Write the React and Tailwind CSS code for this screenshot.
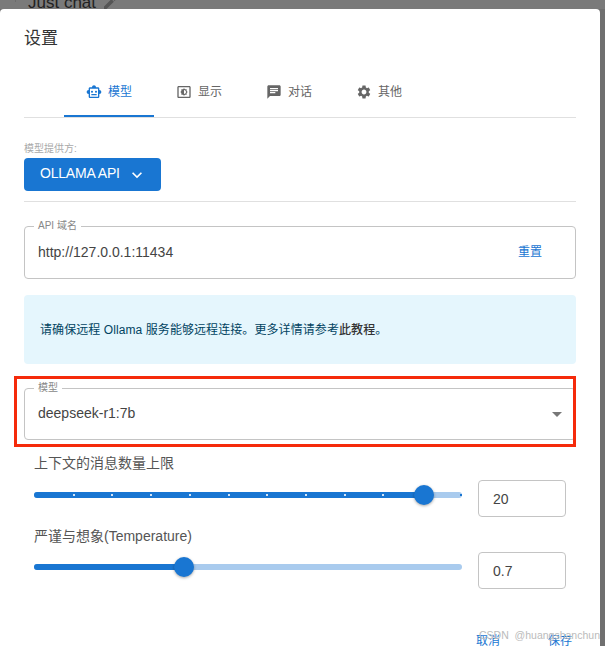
const SANS = "font-['Liberation_Sans','Noto_Sans_CJK_SC',sans-serif]"

function TabIcon({ d, className }) {
  return (
    <svg viewBox="0 0 24 24" fill="currentColor" className={className}>
      <path d={d} />
    </svg>
  )
}

const tabs = [
  {
    label: '模型',
    active: true,
    d: 'M20 9V7c0-1.1-.9-2-2-2h-3c0-1.66-1.34-3-3-3S9 3.34 9 5H6c-1.1 0-2 .9-2 2v2c-1.66 0-3 1.34-3 3s1.34 3 3 3v4c0 1.1.9 2 2 2h12c1.1 0 2-.9 2-2v-4c1.66 0 3-1.34 3-3s-1.34-3-3-3zm-2 10H6V7h12v12zm-9-6c-.83 0-1.5-.67-1.5-1.5S8.17 10 9 10s1.5.67 1.5 1.5S9.83 13 9 13zm7.5-1.5c0 .83-.67 1.5-1.5 1.5s-1.5-.67-1.5-1.5.67-1.5 1.5-1.5 1.5.67 1.5 1.5zM8 15h8v2H8v-2z',
  },
  {
    label: '显示',
    d: 'M20 3H4c-1.1 0-2 .9-2 2v14c0 1.1.9 2 2 2h16c1.1 0 2-.9 2-2V5c0-1.1-.9-2-2-2zm0 16.01H4V4.99h16v14.02zM8 16h2.5l1.5 1.5 1.5-1.5H16v-2.5l1.5-1.5-1.5-1.5V8h-2.5L12 6.5 10.5 8H8v2.5L6.5 12 8 13.5V16zm4-7c1.66 0 3 1.34 3 3s-1.34 3-3 3V9z',
  },
  {
    label: '对话',
    d: 'M20 2H4c-1.1 0-1.99.9-1.99 2L2 22l4-4h14c1.1 0 2-.9 2-2V4c0-1.1-.9-2-2-2zM6 9h12v2H6V9zm8 5H6v-2h8v2zm4-6H6V6h12v2z',
  },
  {
    label: '其他',
    d: 'M19.14 12.94c.04-.3.06-.61.06-.94 0-.32-.02-.64-.07-.94l2.03-1.58c.18-.14.23-.41.12-.61l-1.92-3.32c-.12-.22-.37-.29-.59-.22l-2.39.96c-.5-.38-1.03-.7-1.62-.94l-.36-2.54c-.04-.24-.24-.41-.48-.41h-3.84c-.24 0-.43.17-.47.41l-.36 2.54c-.59.24-1.13.57-1.62.94l-2.39-.96c-.22-.08-.47 0-.59.22L2.74 8.87c-.12.21-.08.47.12.61l2.03 1.58c-.05.3-.09.63-.09.94s.02.64.07.94l-2.03 1.58c-.18.14-.23.41-.12.61l1.92 3.32c.12.22.37.29.59.22l2.39-.96c.5.38 1.03.7 1.62.94l.36 2.54c.05.24.24.41.48.41h3.84c.24 0 .44-.17.47-.41l.36-2.54c.59-.24 1.13-.56 1.62-.94l2.39.96c.22.08.47 0 .59-.22l1.92-3.32c.12-.22.07-.47-.12-.61l-2.01-1.58zM12 15.6c-1.98 0-3.6-1.62-3.6-3.6s1.62-3.6 3.6-3.6 3.6 1.62 3.6 3.6-1.62 3.6-3.6 3.6z',
  },
]

function Tab({ tab }) {
  return (
    <div
      className={`flex h-[38px] w-[90px] items-center justify-center gap-[6px] border-b-2 pb-[10px] text-xs ${
        tab.active ? 'border-[#1976d2] text-[#1976d2]' : 'border-transparent text-[#666]'
      }`}
    >
      <TabIcon d={tab.d} className="h-4 w-4" />
      <span>{tab.label}</span>
    </div>
  )
}

function Outlined({ label, className, children }) {
  return (
    <div className={`relative flex items-center rounded border border-[#c4c4c4] pl-[13px] text-sm text-[#444] ${className}`}>
      <span className="absolute left-[9px] top-[-7px] bg-white px-[4px] text-[10px] leading-[12px] text-[#888]">{label}</span>
      {children}
    </div>
  )
}

function SliderRow({ label, value, pct, marks, className, trackTop, inputTop }) {
  return (
    <div className={`flex flex-col ${className}`}>
      <div className="pl-[10px] text-sm leading-5 text-[#555]">{label}</div>
      <div className="flex items-start">
        <div className={`relative ml-[10px] h-[6px] w-[428px] rounded-full bg-[#a9cbee] ${trackTop}`}>
          <div className="h-full rounded-full bg-[#1976d2]" style={{ width: `${pct}%` }} />
          {marks ? (
            <div className="absolute inset-x-0 top-[2px] flex justify-between">
              {Array.from({ length: 12 }, (_, i) => (
                <span
                  key={i}
                  className={`h-[2px] w-[2px] ${i === 0 ? 'bg-transparent' : i === 11 ? 'bg-[#1976d2]' : 'bg-[#d5e5f6]'}`}
                />
              ))}
            </div>
          ) : null}
          <span
            className="absolute top-[-7px] h-5 w-5 -translate-x-1/2 rounded-full bg-[#1976d2] shadow-[0_1px_3px_rgba(0,0,0,0.35)]"
            style={{ left: `${pct}%` }}
          />
        </div>
        <div className={`ml-[16px] flex h-[37px] w-[88px] items-center rounded border border-[#c4c4c4] pl-[14px] text-sm text-[#444] ${inputTop}`}>
          {value}
        </div>
      </div>
    </div>
  )
}

export default function App() {
  return (
    <div className={`${SANS} relative flex h-[646px] w-[605px] flex-col overflow-hidden bg-[#707070]`}>
      <div className="h-[9px] shrink-0 overflow-hidden bg-[#7a7a7a]">
        <div className="ml-[15px] h-full border-l border-[#6c6c6c] pl-[12px]">
          <div className="mt-[-7px] flex items-center gap-[6px] text-[17px] leading-5 text-[#222]">
            Just chat
            <svg viewBox="0 0 24 24" fill="#555" className="h-4 w-4">
              <path d="M3 17.25V21h3.75L17.81 9.94l-3.75-3.75L3 17.25zM20.71 7.04a1 1 0 0 0 0-1.41l-2.34-2.34a1 1 0 0 0-1.41 0l-1.83 1.83 3.75 3.75 1.83-1.83z" />
            </svg>
          </div>
        </div>
      </div>

      <div className="flex h-[637px] w-[600px] flex-col rounded-t bg-white px-[24px]">
        <div className="w-[552px]">
          <h2 className="pt-[20px] text-[17px] font-normal leading-5 text-[#333]">设置</h2>

          <div className="mt-[30px] flex border-b border-[#e0e0e0] pl-[40px]">
            {tabs.map((tab) => (
              <Tab key={tab.label} tab={tab} />
            ))}
          </div>

          <div className="mt-[25px] text-[10px] leading-3 text-[#aaa]">模型提供方:</div>
          <div className="mt-[3px] flex h-[33px] w-[137px] items-center rounded bg-[#1976d2] pl-[16px] text-sm tracking-[-0.2px] text-white">
            <span className="mb-[3px]">OLLAMA API</span>
            <svg viewBox="0 0 24 24" fill="currentColor" className="ml-[7px] h-5 w-5">
              <path d="M7.41 8.59 12 13.17l4.59-4.58L18 10l-6 6-6-6 1.41-1.41z" />
            </svg>
          </div>
          <div className="mt-[10px] h-px bg-[#e0e0e0]" />

          <Outlined label="API 域名" className="mt-[24px] h-[53px] justify-between pr-[33px]">
            <span className="mb-[2px]">http://127.0.0.1:11434</span>
            <span className="mb-[2px] text-xs text-[#1976d2]">重置</span>
          </Outlined>

          <div className="mt-[16px] flex h-[69px] items-center rounded bg-[#e5f6fd] pl-[16px] text-xs tracking-[0.08px] text-[#014361]">
            <span>
              请确保远程 Ollama 服务能够远程连接。更多详情请参考<span className="font-medium text-[#333]">此教程</span>。
            </span>
          </div>

          <Outlined label="模型" className="mt-[24px] h-[52px] justify-between pr-[6px]">
            <span className="mb-[2px]">deepseek-r1:7b</span>
            <svg viewBox="0 0 24 24" fill="#777" className="h-6 w-6">
              <path d="M7 10l5 5 5-5z" />
            </svg>
          </Outlined>

          <SliderRow
            label="上下文的消息数量上限"
            value="20"
            pct={91.1}
            marks
            className="mt-[13px]"
            trackTop="mt-[19px]"
            inputTop="mt-[7px]"
          />
          <SliderRow
            label="严谨与想象(Temperature)"
            value="0.7"
            pct={35}
            className="mt-[9px]"
            trackTop="mt-[18px]"
            inputTop="mt-[6px]"
          />

          <div className="mt-[42px] flex justify-end gap-[48px] pr-[4px] text-xs leading-5 text-[#1976d2]">
            <span>取消</span>
            <span>保存</span>
          </div>
        </div>
      </div>

      <div className="absolute left-[14px] top-[376px] h-[71px] w-[562px] border-[3px] border-[#f52a0b]" />
      <div className="absolute left-[479px] top-[628px] text-[10.5px] leading-[14px] whitespace-pre text-[#bbb]">CSDN  @huangshanchun</div>
    </div>
  )
}
